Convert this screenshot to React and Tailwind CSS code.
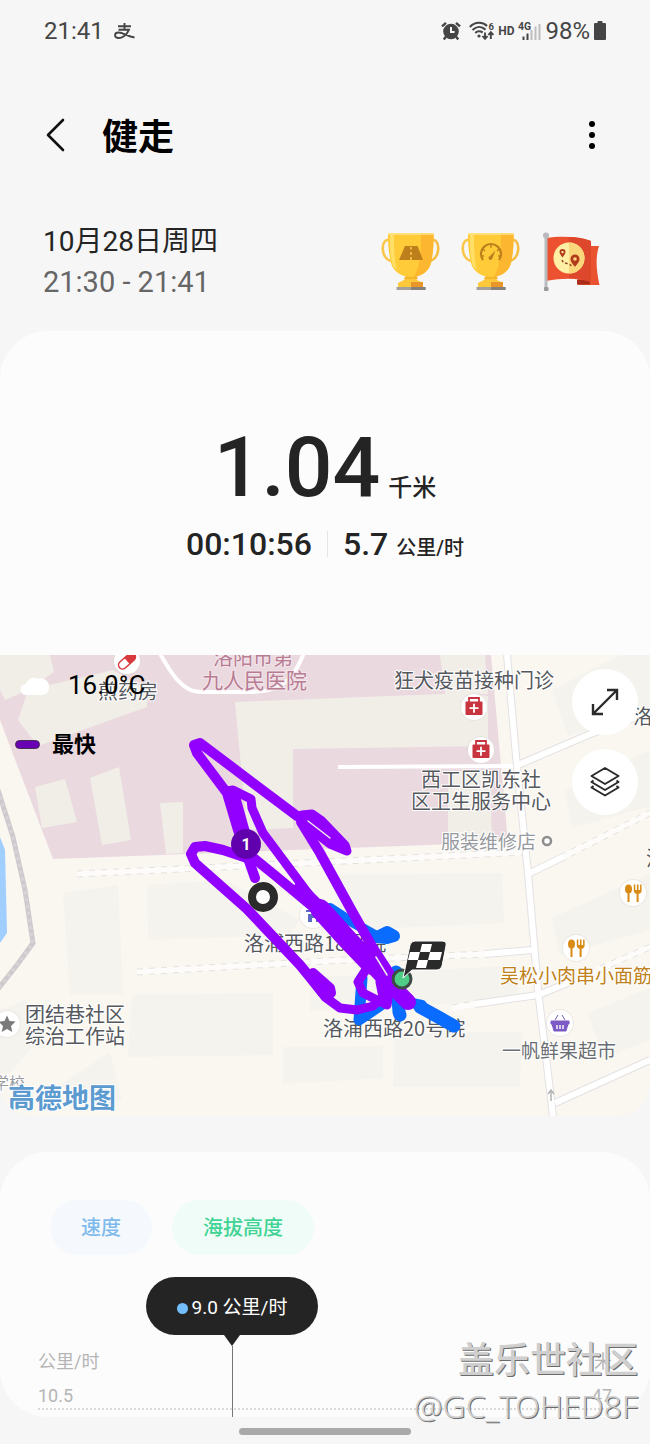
import React from "react";

const SANS = "font-[Roboto,'Noto_Sans_CJK_SC',sans-serif]";

function StatusIcons() {
  return (
    <div className="flex items-center text-[#454545]">
      <svg className="h-5 w-5" viewBox="0 0 20 20" aria-label="闹钟" fill="none" stroke="currentColor">
        <circle cx="10" cy="10.500" r="7.800" fill="currentColor" stroke="none" />
        <path d="M1 5.400 5 1.800M19 5.400 15 1.800M5 15.500 2.800 18.500M15 15.500l2.200 3" strokeWidth="2.400" />
        <path d="M10 6V11H13.600" stroke="#f6f6f6" strokeWidth="2" />
      </svg>
      <svg className="ml-2 h-5 w-[25px]" viewBox="0 0 25 20" aria-label="无线网络" fill="none" stroke="currentColor">
        <path d="M.8 6C6 .6 14 .6 18 5" strokeWidth="2.100" />
        <path d="M3.500 9c4-4 9-4 13-.4" strokeWidth="2.100" />
        <path d="M6.300 12c2-2 5-2 7.400-.5" strokeWidth="2.100" />
        <circle cx="10" cy="15" r="1.600" fill="currentColor" stroke="none" />
        <path d="M16 11.500v6M13.500 15l2.500 2.900 2.500-2.900M21.800 18v-6M19.300 14l2.500-2.900 2.500 2.900" strokeWidth="1.900" />
        <text x="19.500" y="8.500" fontSize="9.500" fontWeight="700" fill="currentColor" stroke="none">6</text>
      </svg>
      <span className="ml-1 text-xs leading-5 font-bold">HD</span>
      <svg className="ml-1 h-5 w-[23px]" viewBox="0 0 23 20" aria-label="信号">
        <text x="0" y="9" fontSize="10.500" fontWeight="700" fill="currentColor">4G</text>
        <path d="M5.500 15.500V19M9.500 12.500V19" stroke="currentColor" strokeWidth="2" />
        <path d="M13.500 9V19M17.500 5.500V19M21.500 3V19" stroke="#bdbdbd" strokeWidth="2" />
      </svg>
      <span className="ml-1 text-2xl">98%</span>
      <svg className="ml-1 h-5 w-3" viewBox="0 0 12 20" aria-label="电池" fill="currentColor">
        <path d="M3.500 2V1q0-1 1-1h3q1 0 1 1v1H11q1 0 1 1v15q0 1-1 1H1q-1 0-1-1V3q0-1 1-1Z" />
      </svg>
    </div>
  );
}

function Trophy({ label, children }) {
  return (
    <svg className="h-[60px] w-[60px]" viewBox="0 0 60 60" role="img" aria-label={label}>
      <path d="M9 8C-1 5-1 28 11 29" fill="none" stroke="#fbc64a" strokeWidth="2.600" />
      <path d="M50 8c10-3 10 20-2 21" fill="none" stroke="#f5bd45" strokeWidth="2.600" />
      <path d="M26 44h8l2 4 6 3v5H17v-5l6-3Z" fill="#fdc93b" />
      <path d="M30 50h12v6H30Z" fill="#e8962a" />
      <path d="M25 43h10l2 4H23Z" fill="#f7b52f" />
      <rect x="15.500" y="55" width="29" height="3" fill="#a3a09d" />
      <path d="M30 55h14.500v3H30z" fill="#858078" />
      <path d="M7 2.500Q7 1.300 9 1.300H51q1.600 0 1.600 1.200C52.600 14 52 22 50 31c-2 8-10 14-20 14S12 39 10 31C8 22 7 14 7 2.500Z" fill="#ffcb38" />
      <path d="M40 1.300H51q1.600 0 1.600 1.200C52.600 14 52 22 50 31c-2 8-9 13-17 14 7-13 7-29 7-43.700Z" fill="#fdb62f" />
      <path d="M9 2.500h4C13 14 13 27 16 38l-4-4C9 26 9 12 9 2.500Z" fill="#ffdf66" />
      <path d="M7 2h45.500" stroke="#ffe48b" strokeWidth="1.400" />
      {children}
    </svg>
  );
}

function Badges() {
  return (
    <div className="flex items-start gap-5">
      <Trophy label="距离奖杯">
        <path d="M24 14h12.500L42 28H18Z" fill="#bd7f1b" />
        <path d="M30 15v2.500M30 20v3M30 25v3" stroke="#f6bd4c" strokeWidth="1.800" />
      </Trophy>
      <Trophy label="速度奖杯">
        <path d="M22 28A10 10 0 1 1 38 28" fill="none" stroke="#bd7f1b" strokeWidth="2.200" />
        <path d="M30 13v3M22 17l2 2M38 17l-2 2M20 24h3M37 24h3" stroke="#bd7f1b" strokeWidth="1.300" />
        <path d="M34.500 18.500 31.500 26a2 2 0 1 1-2.800-1.800Z" fill="#bd7f1b" />
      </Trophy>
      <svg className="h-[60px] w-[60px]" viewBox="0 0 60 60" role="img" aria-label="路线旗帜">
        <path d="M45 14H58q-5 15 .5 39H37V38h10Z" fill="#e9532f" />
        <path d="M36 47.500 49 48v4.500H36z" fill="#a92d19" />
        <path d="M5 6C19 4 37 4 50 9V50C37 46 22 46 5 49Z" fill="#ec5130" />
        <path d="M28 5C36 5 43 6.500 50 9V50C43 47 36 46 28 46Z" fill="#dd472b" />
        <circle cx="28" cy="26" r="15.500" fill="#fff0a6" />
        <path d="M28 10.500a15.500 15.500 0 0 1 0 31Z" fill="#fbd77b" />
        <path fillRule="evenodd" d="M21.500 25.500c-2-3-3-4-3-5.500a3 3 0 0 1 6 0c0 1.500-1 2.500-3 5.500Zm0-4.200a1.200 1.200 0 1 0 0-2.400 1.200 1.200 0 0 0 0 2.400ZM34 35c-3-4-4.500-5.500-4.500-8a4.500 4.500 0 0 1 9 0c0 2.500-1.500 4-4.500 8Zm0-6.200a1.800 1.800 0 1 0 0-3.600 1.800 1.800 0 0 0 0 3.600Z" fill="#b23a1c" />
        <path d="M21 28q1 3 5 3.500t5 4" fill="none" stroke="#8d4a22" strokeWidth="1.500" strokeDasharray="2.500 2" />
        <rect x="3.500" y="4" width="3" height="54" fill="#b9bcbf" />
        <circle cx="5" cy="3.500" r="3" fill="#b7b9bc" />
        <rect x="3" y="55" width="4.500" height="4" rx="1" fill="#999" />
      </svg>
    </div>
  );
}

function Poi({ x, y, children }) {
  return (
    <g transform={`translate(${x} ${y})`}>
      <circle r="14" fill="#d9d6d0" opacity=".4" />
      <circle r="13" fill="#fff" />
      {children}
    </g>
  );
}

function MedicalKit() {
  return (
    <g>
      <path d="M-5-4.500V-9H5v4.500" fill="none" stroke="#c9353f" strokeWidth="1.800" />
      <rect x="-8.500" y="-5.500" width="17" height="13.500" rx="1" fill="#c9353f" />
      <path d="M-4.500 1.200h9M0-3.200v9" stroke="#fff" strokeWidth="1.800" />
    </g>
  );
}

function Cutlery() {
  return (
    <g fill="#d98a14">
      <ellipse cx="-4.500" cy="-4" rx="3.500" ry="4.500" />
      <path d="M-5.500 0h2v9h-2zM3.600 0h2v9h-2zM.8-8.500h1.500V-3h1.600v-5.500h1.600V-3h1.600v-5.500h1.500V-2Q8 1 4.700 1T.8-2Z" />
    </g>
  );
}

const buildingsInCampus = [
  "0,655 50,655 54,672 28,690 5,700 0,690",
  "18,720 28,690 113,670 147,690 147,707 38,746",
  "35,787 65,779 77,822 42,828",
  "90,778 119,767 131,840 102,845",
  "160,803 183,802 183,853 166,854",
  "235,702 468,693 488,696 488,746 293,749 293,828 247,830",
  "440,655 485,655 488,694 445,694",
  "448,772 490,772 492,843 448,845",
];

const buildings = [
  "63,893 118,885 123,995 70,995",
  "147,885 225,880 300,920 290,935 148,940",
  "132,995 273,993 273,1055 128,1057",
  "283,1047 383,1046 383,1078 283,1084",
  "395,1033 522,1032 520,1087 393,1087",
  "330,875 502,873 504,923 345,930",
  "310,978 518,965 518,1000 310,1011",
  "552,918 625,885 650,874 650,930 560,955",
  "588,1013 650,988 650,1040 603,1058",
  "552,690 620,655 650,655 650,712 568,736",
  "565,790 650,750 650,806 572,828",
  "0,1010 25,1000 45,1035 0,1082",
  "60,1085 110,1052 122,1100 100,1108",
];

function MapDrawing() {
  return (
    <svg
      className="block h-[461px] w-full"
      viewBox="0 655 650 461"
      preserveAspectRatio="xMidYMid slice"
      role="img"
      aria-label="健走路线地图"
    >
      <rect y="655" width="650" height="461" fill="#faf7f1" />
      <path d="M0 655H491L508 842 53 859 0 720Z" fill="#ebd9e0" />
      <g fill="#f1eee8">{buildingsInCampus.map((p) => <polygon key={p} points={p} />)}</g>
      <g fill="#f5f3ee">{buildings.map((p) => <polygon key={p} points={p} />)}</g>
      <path d="M0 837 5 850 7 933 0 943Z" fill="#9fceff" />
      <path d="M-2 790 13 837 25 890 33 943 17 965-2 989" fill="none" stroke="#cdc9cd" strokeWidth="5" />
      <path d="M-2 790 13 837 25 890 33 943 17 965-2 989" fill="none" stroke="#d8d5d8" strokeWidth="3" strokeDasharray="3 4" />

      <g fill="none">
        <path d="M158 650C170 672 182 692 200 692H240C270 692 290 692 305 650M338 767 518 766" stroke="#fff" strokeWidth="4" />
        <path d="M77 874 325 862 526 852M137 972 325 961 485 954M452 1008 480 1003M545 993 650 947M560 858 650 813" stroke="#fdfcfa" strokeWidth="6" />
        <path d="M77 871 325 859 526 849M77 877 325 865 526 855M137 969 325 958 485 951M137 975 325 964 485 957M452 1005 480 1000M545 990 650 944M545 996 650 950M560 855 650 810M560 862 650 816" stroke="#e6e3df" strokeWidth="1" strokeDasharray="6 6" />
        <path d="M507 655 517 767 528 873 538 990 553 1116M518 765 588 735 650 712M530 873 565 856M485 954 532 950M475 1004 538 995 570 982M555 1103 650 1060" stroke="#e4e1e3" strokeWidth="8" />
        <path d="M507 655 517 767 528 873 538 990 553 1116M518 765 588 735 650 712M530 873 565 856M485 954 532 950M475 1004 538 995 570 982M555 1103 650 1060" stroke="#fff" strokeWidth="6" />
        <path d="M551 1101v-10M548 1094l3-4 3 4" stroke="#b3b3b3" strokeWidth="1.500" />
      </g>

      <Poi x={127} y={661}>
        <g transform="rotate(-42)">
          <rect x="-10" y="-4" width="20" height="8" rx="4" fill="#fff" stroke="#d8393c" strokeWidth="1.500" />
          <path d="M0-4h6a4 4 0 0 1 0 8H0Z" fill="#d8393c" />
        </g>
      </Poi>
      <Poi x={474} y={707}><MedicalKit /></Poi>
      <Poi x={481} y={750}><MedicalKit /></Poi>
      <Poi x={633} y={893}><Cutlery /></Poi>
      <Poi x={576} y={948}><Cutlery /></Poi>
      <Poi x={313} y={915}>
        <path d="M-7-3V-5H-3V-8H3V-5H8V-3ZM-5-1H7V7H3V3H-1V7H-5Z" fill="#5a6cc4" />
      </Poi>
      <Poi x={560} y={1023}>
        <path d="M-9-2H9V1H8L6 8H-6L-8 1h-1ZM-5-3-2-8M5-3 2-8" fill="#7c5ac4" stroke="#7c5ac4" strokeWidth="1" />
        <path d="M-3 2v4M0 2v4M3 2v4" stroke="#fff" strokeWidth="1.400" />
      </Poi>
      <Poi x={7} y={1024}>
        <path d="m0-8.500 2.500 5.500 6 .6L4 2l1.300 6L0 5-5.300 8-4 2l-4.500-4.400 6-.6Z" fill="#7a7a7a" />
      </Poi>
      <circle cx="547" cy="841" r="4" fill="#fff" stroke="#8d8d8d" strokeWidth="2.500" />

      <g
        className="font-['Noto_Sans_CJK_SC',sans-serif]"
        fill="#55585d"
        fontSize="20"
        stroke="#fff"
        strokeWidth="2"
        paintOrder="stroke"
      >
        <g fill="#b87c93" stroke="#f3e6eb">
          <text x="213" y="665">洛阳市第</text>
          <text x="202" y="688" fontSize="21">九人民医院</text>
        </g>
        <text x="98" y="699">煎药房</text>
        <text x="394" y="688">狂犬疫苗接种门诊</text>
        <text x="421" y="787">西工区凯东社</text>
        <text x="411" y="809">区卫生服务中心</text>
        <text x="441" y="849" fontSize="19" fill="#96999d">服装维修店</text>
        <text x="633" y="724">洛</text>
        <text x="646" y="866">洛</text>
        <text x="244" y="951">洛浦西路18号院</text>
        <text x="323" y="1036">洛浦西路20号院</text>
        <text x="500" y="983" fontSize="19" fill="#bf8119">吴松小肉串小面筋</text>
        <text x="502" y="1058" fontSize="19" fill="#6a6d72">一帆鲜果超市</text>
        <text x="25" y="1022">团结巷社区</text>
        <text x="25" y="1044">综治工作站</text>
        <text x="-7" y="1089" fontSize="16" fill="#96999d">学校</text>
        <text x="8" y="1108" fontSize="27" fontWeight="700" fill="#5b9bd0">高德地图</text>
      </g>

      <g fill="none" strokeLinecap="round" strokeLinejoin="round">
        <g stroke="#0a6bff">
          <path d="M268 870 290 888" strokeWidth="8" />
          <path d="M330 908 350 921 375 935" strokeWidth="10" />
          <path d="M377 937 387 932 394 936 387 938Z" strokeWidth="12" />
          <path d="M362 978 359 1020 384 1003" strokeWidth="11" />
          <path d="M396 972 399 1012 400 1015" strokeWidth="13" />
          <path d="M412 1003 422 1005" strokeWidth="10" />
          <path d="M420 1007 440 1018 454 1026" strokeWidth="13" />
        </g>
        <g stroke="#9200ff">
          <path d="M255 878 238 830 227 793 197 753 194 745 200 743 297 816" strokeWidth="10" />
          <path d="M302 815 312 814 322 821 345 845 347 851 330 844 302 822Z" fill="#9200ff" strokeWidth="9" />
          <path d="M227 791 233 790 251 799 252 808 263 833 313 900 345 942 395 990" strokeWidth="9" />
          <path d="M233 797 245 840" strokeWidth="14" />
          <path d="M301 822 320 853 353 913 373 948 408 1002" strokeWidth="10" />
          <path d="M313 973 330 988 331 993 322 992Z" fill="#9200ff" strokeWidth="10" />
          <path d="M322 992 300 965 247 909 195 863 191 854 195 847 205 846 223 850 247 858 255 859 277 877 313 907 370 965" strokeWidth="10" />
          <path d="M300 889 320 909" strokeWidth="14" />
          <path d="M320 909 347 939 372 965" strokeWidth="20" />
          <path d="M372 965 387 981 408 1002" strokeWidth="16" />
          <path d="M312 980 325 997 340 1008 357 1010 373 1006 383 997 380 982" strokeWidth="9" />
          <path d="M367 968 358 982 363 993 387 1005 388 999 382 980" strokeWidth="9" />
        </g>
        <g stroke="#f1eee8">
          <path d="M308 821 330 838" strokeWidth="1.500" />
          <path d="M376 957 387 975" strokeWidth="1.500" />
        </g>
      </g>

      <circle cx="246" cy="844" r="15" fill="#6100ad" />
      <text className="font-[Roboto,sans-serif]" x="246" y="850" textAnchor="middle" fontSize="16" fontWeight="700" fill="#fff">1</text>
      <circle cx="263" cy="897" r="11" fill="#fff" stroke="#2b2b2b" strokeWidth="8" />
      <circle cx="402" cy="979" r="9" fill="#4fcd86" stroke="#3c4b45" strokeWidth="3" />
      <path d="M403 978 410 945q1-4 5-4h27q5 0 4 5l-4 20q-1 4-5 4H412Z" fill="#2a2a2a" stroke="#fff" strokeWidth="1" />
      <path d="M422 944h10l-2 8h-10ZM410 952h10l-2 8h-10ZM430 952h12l-2 8h-12ZM418 960h10l-2 8h-10Z" fill="#fff" />
    </svg>
  );
}

function MapCard() {
  return (
    <section className="relative overflow-hidden rounded-b-[32px]">
      <MapDrawing />
      <div className="absolute top-3 left-4 flex flex-col gap-6 text-black">
        <div className="flex items-center gap-4">
          <svg className="h-6 w-9" viewBox="0 0 36 24" aria-label="多云" fill="#fff">
            <path d="M10 22a5 5 0 0 1 0-11 8 8 0 0 1 12-5 8 8 0 0 1 11 8q0 8-8 8Z" />
          </svg>
          <span className="text-[26px] leading-9">16.0°C</span>
        </div>
        <div className="-ml-px flex items-center gap-3">
          <span className="h-[9px] w-[25px] rounded-full border border-[#443055] bg-[#6a00b4]" />
          <span className="pt-0.5 text-[22px] leading-8 font-bold">最快</span>
        </div>
      </div>
      <div className="absolute top-3.5 right-3 flex flex-col gap-3.5">
        <button type="button" aria-label="展开地图" className="flex size-[66px] items-center justify-center rounded-full bg-white text-[#2b2b2b]">
          <svg className="size-8" viewBox="0 0 32 32" fill="none" stroke="currentColor" strokeWidth="2.400">
            <path d="M4 28 28 4M18 4h10v10M4 18v10h10" />
          </svg>
        </button>
        <button type="button" aria-label="地图图层" className="flex size-[66px] items-center justify-center rounded-full bg-white text-[#2b2b2b]">
          <svg className="size-8" viewBox="0 0 32 32" fill="none" stroke="currentColor" strokeWidth="2" strokeLinejoin="round">
            <path d="M16 2 29.500 10 16 18 2.500 10ZM4.500 14.500 2.500 16 16 24l13.500-8-2-1.500M4.500 20l-2 1.500L16 29.500l13.500-8-2-1.500" />
          </svg>
        </button>
      </div>
    </section>
  );
}

function ChartCard() {
  return (
    <section className="mt-9 overflow-hidden rounded-[48px] bg-[#fcfcfc] pt-12">
      <div className="flex gap-5 px-[50px] text-xl font-medium">
        <button type="button" className="h-[55px] rounded-full bg-[#f5f9fd] px-[31px] text-[#7fbaec]">速度</button>
        <button type="button" className="h-[55px] rounded-full bg-[#effcf7] px-[31px] text-[#3fd394]">海拔高度</button>
      </div>
      <div className="relative mt-[22px] h-[140px]">
        <div className="absolute top-0 left-[146px] flex h-full flex-col items-center">
          <div className="flex h-[58px] w-[172px] shrink-0 items-center justify-center gap-1 rounded-full bg-[#242424] pt-1 text-[19px] text-white">
            <span className="size-[11px] rounded-full bg-[#74bdfb]" />
            <span>9.0 公里/时</span>
          </div>
          <svg className="h-[11px] w-4 shrink-0" viewBox="0 0 16 11" aria-hidden="true"><path d="M0 0H16L8 11Z" fill="#242424" /></svg>
          <span className="w-px flex-1 bg-[#777]" />
        </div>
        <div className="flex h-full flex-col justify-end px-[38px] pb-[7px] text-lg text-[#b5b5b5]">
          <div className="mb-1 flex justify-between leading-9"><span>公里/时</span><span>米</span></div>
          <div className="flex justify-between border-b-2 border-dotted border-[#dadada] leading-6"><span>10.5</span><span>47</span></div>
        </div>
      </div>
    </section>
  );
}

export default function App() {
  return (
    <main className={`relative w-full overflow-hidden bg-[#f6f6f6] text-[#242424] ${SANS}`}>
      <div className="flex h-[62px] items-center justify-between pr-11 pl-11 text-2xl text-[#454545]">
        <div className="flex items-center gap-2.5">
          <span>21:41</span>
          <svg className="h-4 w-[21px]" viewBox="0 0 21 16" aria-label="支付宝" fill="none" stroke="currentColor" strokeWidth="1.900">
            <path d="M4 3.200H17M10.500 0V6.500M4.500 6.700H15C13 12 8 15.300 4 15 0 14.500 0 9.500 4.500 9.500 9 9.500 13 13 20.500 14.500" />
          </svg>
        </div>
        <StatusIcons />
      </div>

      <header className="flex h-[148px] items-center pr-12 pl-11">
        <button type="button" aria-label="返回" className="flex h-10 w-6 items-center">
          <svg className="h-9 w-6" viewBox="0 0 24 36" fill="none" stroke="#111" strokeWidth="2.600" strokeLinecap="round" strokeLinejoin="round">
            <path d="M19 2 4 17 19 32" />
          </svg>
        </button>
        <h1 className="ml-[34px] flex-1 pt-1 text-4xl font-bold text-black">健走</h1>
        <button type="button" aria-label="更多选项" className="flex h-10 w-5 items-center justify-center">
          <svg className="h-8 w-2" viewBox="0 0 8 32" fill="#000">
            <circle cx="4" cy="4" r="3" /><circle cx="4" cy="15" r="3" /><circle cx="4" cy="26" r="3" />
          </svg>
        </button>
      </header>

      <section className="flex h-[121px] items-start justify-between pt-3 pr-[49px] pl-[43px]">
        <div className="flex flex-col leading-10">
          <span className="text-[28px]">10月28日周四</span>
          <span className="text-[29px] text-[#666]">21:30 - 21:41</span>
        </div>
        <div className="pt-2.5"><Badges /></div>
      </section>

      <section className="flex h-[324px] flex-col items-center rounded-t-[48px] bg-[#fcfcfc] pt-[87px] font-medium">
        <p className="flex items-baseline gap-2 text-[84px] leading-[100px]">
          1.04<span className="text-2xl">千米</span>
        </p>
        <div className="mt-1 flex items-center text-[32px] leading-[44px]">
          <span>00:10:56</span>
          <span className="mx-[15px] h-[26px] w-px bg-[#e6e6e6]" />
          <p className="flex items-baseline gap-2">5.7<span className="text-xl">公里/时</span></p>
        </div>
      </section>

      <MapCard />
      <ChartCard />

      <footer className="flex h-7 items-center justify-center">
        <span className="h-[7px] w-[172px] rounded-full bg-[#a9a9a9]" />
      </footer>

      <div className="absolute right-3 bottom-[18px] flex flex-col items-end text-[#cfcfcf] [text-shadow:1px_1px_0_#6b6b6b]">
        <span className="text-4xl leading-[48px] font-medium">盖乐世社区</span>
        <span className="font-['Noto_Sans',sans-serif] text-[32px] leading-[42px] font-light">@GC_TOHED8F</span>
      </div>
    </main>
  );
}
